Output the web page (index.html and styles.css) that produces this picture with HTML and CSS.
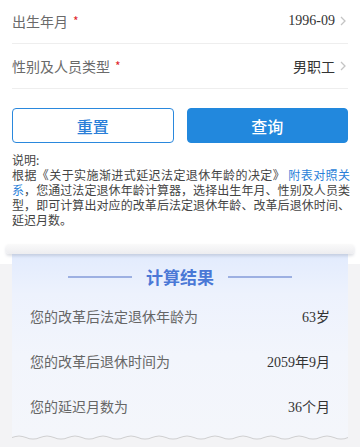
FILE: index.html
```html
<!DOCTYPE html>
<html lang="zh-CN">
<head>
<meta charset="utf-8">
<title>法定退休年龄计算器</title>
<link rel="stylesheet" href="styles.css">
</head>
<body>
<div class="form">
  <div class="row">
    <span class="label">出生年月<i class="req">*</i></span>
    <span class="value"><span class="num">1996-09</span><svg class="chev" viewBox="0 0 6 10" width="6" height="10"><path d="M1 1l4 4-4 4" fill="none" stroke="#c4c4c4" stroke-width="1.3"/></svg></span>
  </div>
  <div class="row">
    <span class="label">性别及人员类型<i class="req">*</i></span>
    <span class="value">男职工<svg class="chev" viewBox="0 0 6 10" width="6" height="10"><path d="M1 1l4 4-4 4" fill="none" stroke="#c4c4c4" stroke-width="1.3"/></svg></span>
  </div>
</div>
<div class="actions">
  <button class="btn btn-reset">重置</button>
  <button class="btn btn-query">查询</button>
</div>
<div class="note">
  <div class="note-head">说明:</div>
  <p>根据《关于实施渐进式延迟法定退休年龄的决定》 <span class="link">附表对照关系</span>，您通过法定退休年龄计算器，选择出生年月、性别及人员类型，即可计算出对应的改革后法定退休年龄、改革后退休时间、延迟月数。</p>
</div>
<div class="result-section">
  <div class="slot"></div>
  <div class="card">
    <div class="title"><span class="line"></span><span class="title-text">计算结果</span><span class="line"></span></div>
    <div class="res-row"><span class="res-label">您的改革后法定退休年龄为</span><span class="res-value">63岁</span></div>
    <div class="res-row"><span class="res-label">您的改革后退休时间为</span><span class="res-value">2059年9月</span></div>
    <div class="res-row"><span class="res-label">您的延迟月数为</span><span class="res-value">36个月</span></div>
  </div>
  <svg class="wave" viewBox="0 0 336 8" preserveAspectRatio="none"><path d="M0 0H336V4Q329 7 322 4T308 4T294 4T280 4T266 4T252 4T238 4T224 4T210 4T196 4T182 4T168 4T154 4T140 4T126 4T112 4T98 4T84 4T70 4T56 4T42 4T28 4T14 4T0 4Z" fill="#f4f6fb"/></svg>
</div>
</body>
</html>
```
FILE: styles.css
```css
* { box-sizing: border-box; }
html, body { margin: 0; padding: 0; }
body {
  width: 360px;
  height: 447px;
  overflow: hidden;
  background: #fff;
  font-family: "Noto Sans CJK SC", "Noto Sans", sans-serif;
  color: #333;
}
.form { padding: 0 12px; margin-top: -1px; }
.row {
  height: 45px;
  border-bottom: 1px solid #eeeeee;
  display: flex;
  align-items: center;
  justify-content: space-between;
}
.label { font-size: 14px; color: #6a6a6a; }
.req { font-style: normal; color: #e0262b; font-size: 12px; margin-left: 5px; vertical-align: 1px; }
.value { font-size: 14px; color: #333; display: flex; align-items: center; }
.num { font-family: "Liberation Serif", serif; font-size: 14px; }
.chev { margin-left: 5px; margin-right: 2px; }
.actions {
  display: flex;
  gap: 13px;
  padding: 0 12px;
  margin-top: 19px;
}
.btn {
  flex: 1;
  height: 35px;
  border-radius: 4px;
  font-family: "Noto Sans CJK SC", sans-serif;
  font-size: 16px;
  font-weight: 500;
  padding: 0;
  cursor: pointer;
}
.btn-reset { background: #fff; border: 1px solid #2a88dd; color: #2a7fd8; }
.btn-query { background: #2288dd; border: 1px solid #2288dd; color: #fff; }
.note {
  padding: 0 10px 0 12px;
  margin-top: 9px;
  font-size: 12px;
  line-height: 15px;
  color: #444;
}
.note-head { height: 15px; }
.note p { margin: 0; text-align: justify; }
.link { color: #2a7fd8; }
.result-section {
  margin-top: 17px;
  height: 210px;
  background: linear-gradient(to bottom, #fff 20px, #f3f3f5 20px);
}
.slot {
  position: relative;
  z-index: 1;
  height: 10px;
  margin: 0 6px;
  border-radius: 3px;
  background: linear-gradient(to bottom, #fafafa, #ededf0);
  box-shadow: 0 2px 3px rgba(60, 70, 100, 0.18);
}
.card {
  margin: 0 12px;
  padding: 12px 18px 5px;
  background: linear-gradient(to bottom, #e2ebfd 0px, #edf2fd 40px, #f2f5fc 100px, #f4f6fb 100%);
}
.title {
  height: 22px;
  display: flex;
  align-items: center;
  justify-content: center;
  gap: 14px;
  margin-bottom: 5px;
}
.line { width: 64px; height: 2px; background: #9db0e2; }
.title-text { font-size: 17px; font-weight: 700; color: #4a78d6; line-height: 22px; }
.res-row {
  height: 45px;
  display: flex;
  align-items: center;
  justify-content: space-between;
}
.res-label { font-size: 14px; color: #666; }
.res-value { font-size: 14px; color: #333; font-family: "Liberation Serif", "Noto Sans CJK SC", serif; }
.wave {
  display: block;
  width: 336px;
  height: 8px;
  margin: 0 12px;
  filter: drop-shadow(0 1px 0.6px rgba(0, 0, 0, 0.15));
}
```
